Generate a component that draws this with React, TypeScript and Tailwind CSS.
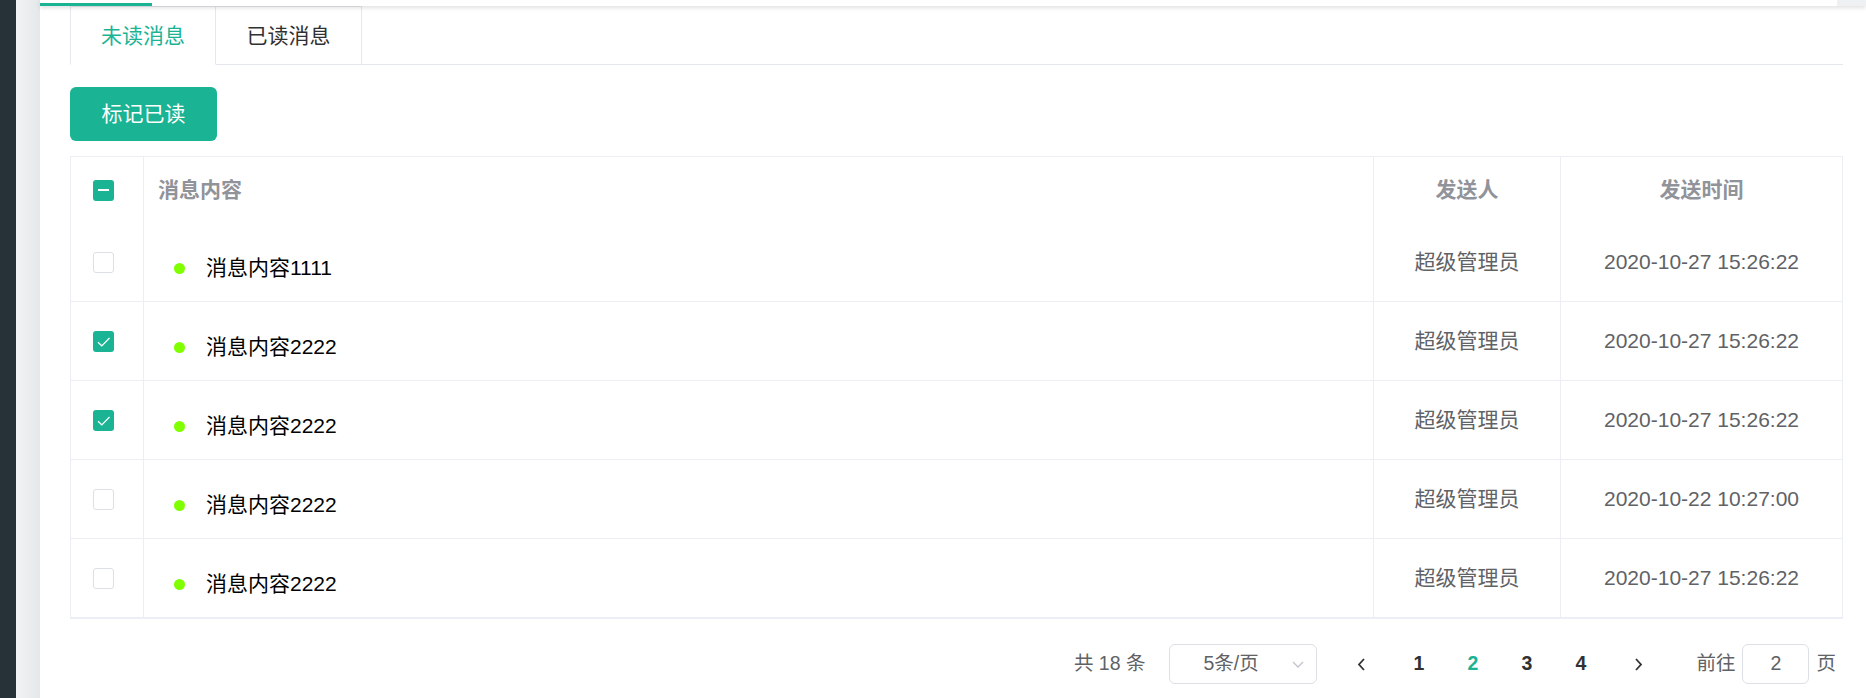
import React, { useState } from "react";

const rows = [
  { id: 1, content: "消息内容1111", checked: false, sender: "超级管理员", time: "2020-10-27 15:26:22" },
  { id: 2, content: "消息内容2222", checked: true, sender: "超级管理员", time: "2020-10-27 15:26:22" },
  { id: 3, content: "消息内容2222", checked: true, sender: "超级管理员", time: "2020-10-27 15:26:22" },
  { id: 4, content: "消息内容2222", checked: false, sender: "超级管理员", time: "2020-10-22 10:27:00" },
  { id: 5, content: "消息内容2222", checked: false, sender: "超级管理员", time: "2020-10-27 15:26:22" },
];

function Checkbox({ state }: { state: "on" | "off" | "some" }) {
  if (state === "off") {
    return <span className="block w-[21px] h-[21px] rounded-[3px] border border-[#dcdfe6] bg-white" />;
  }
  return (
    <span className="flex items-center justify-center w-[21px] h-[21px] rounded-[3px] bg-[#1ab394]">
      {state === "some" ? (
        <span className="block w-[11px] h-[2px] bg-white" />
      ) : (
        <svg width="21" height="21" viewBox="0 0 21 21" fill="none">
          <path d="M5 11.2 L8.8 14.8 L16.5 7" stroke="white" strokeWidth="1.2" />
        </svg>
      )}
    </span>
  );
}

function Chevron({ dir }: { dir: "left" | "right" | "down" }) {
  const d = dir === "left" ? "M8 2 L3 7.5 L8 13" : dir === "right" ? "M3 2 L8 7.5 L3 13" : "M1 3 L6 8 L11 3";
  if (dir === "down") {
    return (
      <svg width="12" height="10" viewBox="0 0 12 10" fill="none">
        <path d={d} stroke="#c0c4cc" strokeWidth="1.3" />
      </svg>
    );
  }
  return (
    <svg width="11" height="15" viewBox="0 0 11 15" fill="none">
      <path d={d} stroke="#303133" strokeWidth="1.8" />
    </svg>
  );
}

export default function App() {
  const [tab, setTab] = useState(0);
  const [page, setPage] = useState(2);

  return (
    <div className="flex h-[698px] w-full overflow-hidden bg-white font-['Liberation_Sans','Noto_Sans_CJK_SC',sans-serif]">
      <div className="w-[16px] shrink-0 bg-[#263238]" />
      <div className="w-[24px] shrink-0 bg-gradient-to-r from-[#f1f3f4] to-[#e5e8ea]" />

      <div className="flex-1 flex flex-col min-w-0">
        {/* top bar */}
        <div className="flex h-[6px] shrink-0 relative z-10 shadow-[0_2px_4px_rgba(0,0,0,0.12)]">
          <div className="flex-1 bg-white flex">
            <div className="mt-[3px] h-[3px] w-[112px] bg-[#1ab394]" />
          </div>
          <div className="w-[29px] bg-[#eef0f2]" />
        </div>

        <div className="flex-1 flex flex-col pl-[30px] pr-[23px]">
          {/* tabs */}
          <div className="flex h-[59px] shrink-0">
            {["未读消息", "已读消息"].map((t, i) => (
              <button
                key={t}
                onClick={() => setTab(i)}
                className={`w-[146px] flex items-center justify-center text-[21px] border-t border-[#e4e7ed] ${
                  i === 0 ? "border-l border-r" : "border-r"
                } ${tab === i ? "text-[#1ab394] border-b border-b-white" : "text-[#303133] border-b"}`}
              >
                {t}
              </button>
            ))}
            <div className="flex-1 border-b border-[#e4e7ed]" />
          </div>

          <div className="mt-[22px]">
            <button className="w-[147px] h-[54px] rounded-[6px] bg-[#1ab394] text-white text-[21px]">标记已读</button>
          </div>

          {/* table */}
          <div className="mt-[15px] border-t border-l border-r border-[#ebeef5]">
            <div className="grid grid-cols-[73px_1230px_187px_1fr] h-[66px]">
              <div className="flex items-center pl-[22px] border-r border-[#ebeef5]">
                <Checkbox state="some" />
              </div>
              <div className="flex items-center pl-[14px] border-r border-[#ebeef5] text-[21px] font-bold text-[#909399]">
                消息内容
              </div>
              <div className="flex items-center justify-center border-r border-[#ebeef5] text-[21px] font-bold text-[#909399]">
                发送人
              </div>
              <div className="flex items-center justify-center text-[21px] font-bold text-[#909399]">发送时间</div>
            </div>
            {rows.map((r, i) => (
              <div
                key={r.id}
                className={`grid grid-cols-[73px_1230px_187px_1fr] border-[#ebeef5] ${
                  i === rows.length - 1 ? "h-[80px] border-b-2" : "h-[79px] border-b"
                }`}
              >
                <div className="flex items-center pl-[22px] border-r border-[#ebeef5]">
                  <Checkbox state={r.checked ? "on" : "off"} />
                </div>
                <div className="flex items-center pl-[30px] pt-[12px] border-r border-[#ebeef5]">
                  <span className="w-[11px] h-[11px] rounded-full bg-[#7fff00]" />
                  <span className="ml-[21px] text-[21px] text-black">{r.content}</span>
                </div>
                <div className="flex items-center justify-center border-r border-[#ebeef5] text-[21px] text-[#606266]">
                  {r.sender}
                </div>
                <div className="flex items-center justify-center text-[21px] text-[#606266]">{r.time}</div>
              </div>
            ))}
          </div>

          {/* pagination */}
          <div className="mt-[25px] flex items-center justify-end pr-[7px] text-[19.5px] text-[#606266]">
            <span>共 18 条</span>
            <div className="ml-[24px] w-[148px] h-[40px] rounded-[6px] border border-[#dcdfe6] flex items-center pl-[33px] pr-[12px]">
              <span className="flex-1">5条/页</span>
              <Chevron dir="down" />
            </div>
            <button className="ml-[22px] w-[45px] h-[40px] flex items-center justify-center">
              <Chevron dir="left" />
            </button>
            <div className="ml-[12px] flex gap-[9px]">
              {[1, 2, 3, 4].map((n) => (
                <button
                  key={n}
                  onClick={() => setPage(n)}
                  className={`w-[45px] h-[40px] font-bold ${page === n ? "text-[#1ab394]" : "text-[#303133]"}`}
                >
                  {n}
                </button>
              ))}
            </div>
            <button className="ml-[13px] w-[45px] h-[40px] flex items-center justify-center">
              <Chevron dir="right" />
            </button>
            <span className="ml-[35px]">前往</span>
            <div className="ml-[7px] w-[67px] h-[40px] rounded-[6px] border border-[#dcdfe6] flex items-center justify-center">
              {page}
            </div>
            <span className="ml-[7px]">页</span>
          </div>
        </div>
      </div>
    </div>
  );
}
